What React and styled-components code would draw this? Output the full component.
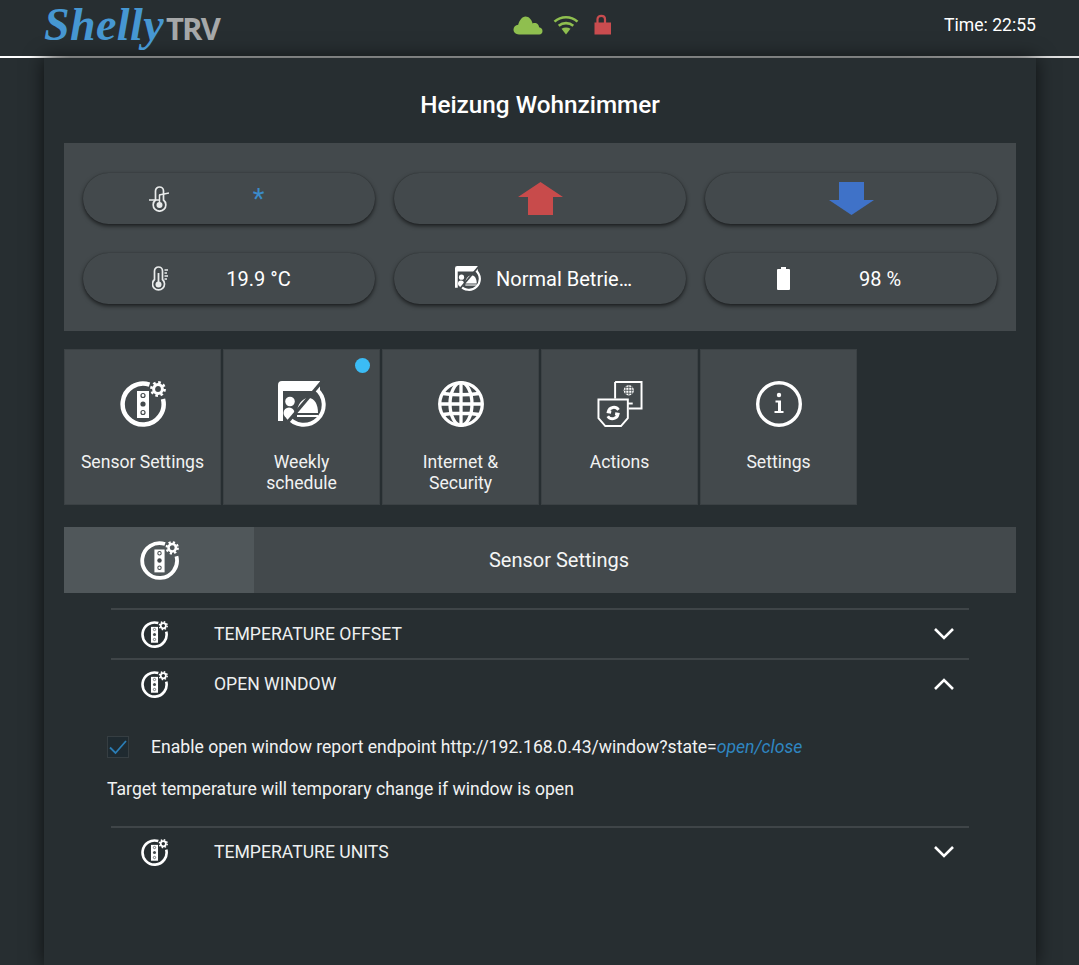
import React from 'react';
import styled, { createGlobalStyle } from 'styled-components';

const panelBg = '#43494c';
const pageBg = '#272e31';

const GlobalStyle = createGlobalStyle`
  html, body {
    margin: 0;
    height: 965px;
    overflow: hidden;
    background: ${pageBg};
    font-family: Roboto, "Liberation Sans", sans-serif;
    color: #fff;
  }
`;

const Header = styled.header`
  height: 56px;
  box-sizing: border-box;
  display: grid;
  grid-template-columns: 513px 1fr auto;
  align-items: center;
  padding: 0 43px 7px 0;
  background: #272e31;
`;

const HeaderLine = styled.div`
  height: 2px;
  background: linear-gradient(90deg, #fff 0, #fff 30px, #b4b6b6 70px, #b4b6b6 900px, #e4e4e4 100%);
`;

const Logo = styled.div`
  display: flex;
  align-items: baseline;
  padding-left: 44px;
  height: 46px;
`;

const LogoScript = styled.span`
  font-family: "Liberation Serif", serif;
  font-style: italic;
  font-weight: 700;
  font-size: 46px;
  line-height: 46px;
  letter-spacing: 0.4px;
  color: #4697d2;
`;

const LogoProduct = styled.span`
  font-family: "Open Sans", sans-serif;
  font-weight: 700;
  font-size: 31px;
  letter-spacing: -1.8px;
  color: #a6a8a9;
  margin-left: 2px;
`;

const StatusIcons = styled.div`
  display: flex;
  align-items: center;
  svg { display: block; }
`;

const Clock = styled.div`
  font-size: 17.6px;
`;

const Card = styled.main`
  margin: 0 43px 0 44px;
  padding: 0 20px;
  height: 907px;
  background: ${pageBg};
  box-shadow: 0 0 18px rgba(0, 0, 0, .65);
`;

const Title = styled.h1`
  margin: 0;
  height: 85px;
  display: flex;
  align-items: center;
  justify-content: center;
  padding-top: 8px;
  box-sizing: border-box;
  font-size: 24.3px;
  font-weight: 500;
`;

const ControlPanel = styled.section`
  display: grid;
  grid-template-columns: repeat(3, 1fr);
  gap: 29px 19px;
  padding: 30px 19px 27px;
  background: ${panelBg};
`;

const Pill = styled.div`
  height: 51px;
  box-sizing: border-box;
  border-radius: 26px;
  display: flex;
  align-items: center;
  justify-content: ${p => (p.$center ? 'center' : 'flex-start')};
  padding-left: ${p => (p.$center ? 0 : p.$iconLeft || 66)}px;
  background: ${panelBg};
  box-shadow: 0 2px 4px rgba(0, 0, 0, .6), 0 0 1px rgba(0, 0, 0, .35);
  font-size: 20px;
  svg { display: block; flex: none; }
`;

const PillValue = styled.span`
  flex: ${p => (p.$tight ? 'none' : 1)};
  margin-left: ${p => p.$gap || 0}px;
  padding-right: ${p => (p.$tight ? 0 : 27)}px;
  text-align: center;
  font-size: ${p => p.$size || 20}px;
  color: ${p => p.$color || '#fff'};
`;

const TileGrid = styled.nav`
  display: grid;
  grid-template-columns: repeat(6, 1fr);
  gap: 2px;
  margin-top: 18px;
`;

const Tile = styled.div`
  position: relative;
  height: 156px;
  box-sizing: border-box;
  padding-top: 31px;
  border: 1px solid #3b4144;
  background: ${panelBg};
  display: flex;
  flex-direction: column;
  align-items: center;
  text-align: center;
  font-size: 17.6px;
  line-height: 21px;
  svg { display: block; }
`;

const TileLabel = styled.div`
  margin-top: 25px;
  padding: 0 8px;
  color: #f1f2f2;
`;

const Badge = styled.span`
  position: absolute;
  top: 8px;
  right: 9px;
  width: 15px;
  height: 15px;
  border-radius: 50%;
  background: #3bbcf5;
`;

const TabBar = styled.div`
  display: grid;
  grid-template-columns: 190px 610px 1fr;
  height: 66px;
  margin-top: 22px;
  background: ${panelBg};
`;

const Tab = styled.div`
  display: flex;
  align-items: center;
  justify-content: center;
  font-size: 20px;
  color: #f4f5f5;
  background: ${p => (p.$active ? '#50575a' : 'transparent')};
`;

const Accordion = styled.section`
  margin: 15px 47px 0;
`;

const Row = styled.div`
  height: 50px;
  box-sizing: border-box;
  border-top: 2px solid #3f4548;
  display: grid;
  grid-template-columns: 103px 1fr 50px;
  align-items: center;
  font-size: 17.6px;
  color: #eef0f0;
  svg { display: block; }
`;

const RowIcon = styled.div`
  display: flex;
  justify-content: center;
  padding-right: 17px;
`;

const RowChevron = styled.div`
  display: flex;
  justify-content: center;
`;

const RowBody = styled.div`
  height: 118px;
  box-sizing: border-box;
  margin-left: -4px;
  padding-top: 28px;
  font-size: 17.6px;
  color: #f1f2f2;
`;

const CheckLine = styled.div`
  display: flex;
  align-items: center;
  gap: 22px;
  height: 22px;
`;

const CheckBox = styled.span`
  width: 22px;
  height: 22px;
  box-sizing: border-box;
  border: 1px solid #363e42;
  background: #1f2a30;
  display: flex;
  align-items: center;
  justify-content: center;
`;

const Endpoint = styled.em`
  color: #2f86c1;
`;

const Hint = styled.p`
  margin: 20px 0 0;
  line-height: 22px;
`;

const Cloud = () => (
  <svg width="30" height="20" viewBox="0 0 30 20">
    <path fill="#8fbf4f" d="M6 19.500C2.600 19.500 .5 17.300 .5 14.600c0-2.700 2-4.700 4.700-4.900C6.200 6 8.900 1.600 12.600 1.600c3.200 0 5.900 2.900 7 6.800 1-.5 2-.6 3-.3 2 .5 3.300 2.200 3.500 4.200 2 .3 3.400 1.600 3.400 3.800 0 2.200-1.300 3.400-3.200 3.400z" />
  </svg>
);

const Wifi = () => (
  <svg width="26" height="20" viewBox="0 0 26 20" style={{ marginLeft: 10 }}>
    <path fill="none" stroke="#8fbf4f" strokeWidth="2.600" d="M1.500 6.600C8 .7 18 .7 24.500 6.600" />
    <path fill="none" stroke="#8fbf4f" strokeWidth="2.600" d="M5.700 10.700c4.300-3.500 10.300-3.500 14.600 0" />
    <path fill="#8fbf4f" d="M13 19.500 8.500 13.800c2.700-1.800 6.300-1.800 9 0z" />
  </svg>
);

const Lock = () => (
  <svg width="18" height="21" viewBox="0 0 18 21" style={{ marginLeft: 15 }}>
    <path fill="none" stroke="#c94c4f" strokeWidth="2.200" d="M3.500 9V5c0-4.300 7.500-4.300 7.500 0v4" />
    <rect x=".5" y="8.500" width="16.500" height="12" fill="#c94c4f" />
  </svg>
);

const ThermoSet = () => (
  <svg width="20" height="26" viewBox="0 0 20 26" fill="none" stroke="#e9ebeb" strokeWidth="1.700">
    <path d="M6.500 14V5a4 4 0 0 1 8 0v9a6.300 6.300 0 1 1-8 0z" />
    <circle cx="10.500" cy="19" r="3" fill="#e9ebeb" stroke="none" />
    <path d="M10.500 18V9" strokeWidth="1.500" />
    <path d="M0 14h10M10 9l10-2" />
  </svg>
);

const Thermo = () => (
  <svg width="17" height="25" viewBox="0 0 17 25" fill="none" stroke="#e9ebeb" strokeWidth="1.700">
    <path d="M2.500 13.500V5a4 4 0 0 1 8 0v8.500a6 6 0 1 1-8 0z" />
    <circle cx="6.500" cy="18.500" r="3" fill="#e9ebeb" stroke="none" />
    <path d="M6.500 18V7" strokeWidth="1.800" />
    <path d="M12.500 4H16M12.500 7H15M12.500 10H16M12.500 13H15" strokeWidth="1.300" />
  </svg>
);

const Battery = () => (
  <svg width="13" height="23" viewBox="0 0 13 23">
    <path fill="#fff" d="M4 0h5v2h3a1 1 0 0 1 1 1v19a1 1 0 0 1-1 1H1a1 1 0 0 1-1-1V3a1 1 0 0 1 1-1h3z" />
  </svg>
);

const ArrowUp = () => (
  <svg width="45" height="33" viewBox="0 0 45 33">
    <path fill="#c84b4b" d="M22.500 0 45 15H35v18H10V15H0z" />
  </svg>
);

const ArrowDown = () => (
  <svg width="45" height="33" viewBox="0 0 45 33">
    <path fill="#3f72c8" d="M22.500 33 45 18H35V0H10v18H0z" />
  </svg>
);

const SensorIcon = ({ size = 46 }) => (
  <svg width={size} height={size} viewBox="0 0 46 46">
    <path fill="none" stroke="#fff" strokeWidth="4.500" d="M29.500 3.600A20.500 20.500 0 1 0 43 18" />
    <rect x="17" y="10" width="12" height="27" fill="#fff" />
    <circle cx="23" cy="14.500" r="2" fill="none" stroke="#43494c" strokeWidth="1.200" />
    <circle cx="23" cy="23" r="2.600" fill="#43494c" />
    <circle cx="23" cy="31.500" r="2" fill="none" stroke="#43494c" strokeWidth="1.200" />
    <circle cx="38" cy="8" r="4.400" fill="none" stroke="#fff" strokeWidth="3" />
    <circle cx="38" cy="8" r="6.600" fill="none" stroke="#fff" strokeWidth="2.600" strokeDasharray="2.590 2.590" />
  </svg>
);

const ScheduleIcon = ({ height = 46 }) => (
  <svg width={height * 48 / 46} height={height} viewBox="0 0 48 46">
    <path fill="#fff" d="M4 0h38v10H5v30H0V4a4 4 0 0 1 4-4z" />
    <circle cx="12" cy="20.500" r="4.800" fill="#fff" />
    <circle cx="11" cy="32" r="5.500" fill="#fff" />
    <path fill="none" stroke="#fff" strokeWidth="4" d="M38 8A20 20 0 1 1 9.500 35.500" />
    <path fill="#fff" d="M19 32c0-8 5-15 11.500-15S40 24 40 32z" />
    <path stroke="#fff" strokeWidth="2" d="M19 35h21" />
    <path stroke={panelBg} strokeWidth="3.200" d="M47-3 3 49" />
  </svg>
);

const GlobeIcon = () => (
  <svg width="46" height="46" viewBox="0 0 46 46" fill="none" stroke="#fff" strokeWidth="3.300">
    <circle cx="23" cy="23" r="21.300" />
    <ellipse cx="23" cy="23" rx="11" ry="21.300" />
    <path d="M23 2v42M2 23h42M5 12.500c11 1.500 25 1.500 36 0M5 33.500c11-1.500 25-1.500 36 0" />
  </svg>
);

const ActionsIcon = () => (
  <svg width="46" height="46" viewBox="0 0 46 47" fill="none" stroke="#fff" strokeWidth="2">
    <path d="M18 1h27v27H32" />
    <path d="M18 1v17" />
    <circle cx="32" cy="9.500" r="5.200" fill="#fff" stroke="none" />
    <path d="M27 9.500h10M32 4.500v10M29 4.500v10M35 4.500v10M28 6.500h8M28 12.500h8" stroke={panelBg} strokeWidth=".8" />
    <path d="M29 23h7" strokeWidth="2" />
    <path d="M1 19h30v19l-7 8H8l-7-8z" fill={panelBg} />
    <path d="M21.500 29.500a5.800 5.800 0 0 0-10.500 2l3 .5M10.500 36a5.800 5.800 0 0 0 10.500-2l-3-.5" strokeWidth="3" />
  </svg>
);

const InfoIcon = () => (
  <svg width="46" height="46" viewBox="0 0 46 46">
    <circle cx="23" cy="23" r="21.300" fill="none" stroke="#fff" strokeWidth="3.400" />
    <circle cx="23" cy="14" r="2.200" fill="#fff" />
    <path fill="#fff" d="M19.500 19.500h5.500V30h2.500v2h-9v-2H22v-8.500h-2.500z" />
  </svg>
);

const Chevron = ({ up }) => (
  <svg width="22" height="14" viewBox="0 0 22 14" fill="none" stroke="#fff" strokeWidth="2.600">
    <path d={up ? 'M2 12 11 3l9 9' : 'M2 2l9 9 9-9'} />
  </svg>
);

const tiles = [
  { label: 'Sensor Settings', icon: <SensorIcon /> },
  { label: <>Weekly<br />schedule</>, icon: <ScheduleIcon />, badge: true },
  { label: <>Internet &amp;<br />Security</>, icon: <GlobeIcon /> },
  { label: 'Actions', icon: <ActionsIcon /> },
  { label: 'Settings', icon: <InfoIcon /> },
];

const AccordionRow = ({ title, up }) => (
  <Row>
    <RowIcon><SensorIcon size={27} /></RowIcon>
    <span>{title}</span>
    <RowChevron><Chevron up={up} /></RowChevron>
  </Row>
);

export default function App() {
  return (
    <>
      <GlobalStyle />
      <Header>
        <Logo>
          <LogoScript>Shelly</LogoScript>
          <LogoProduct>TRV</LogoProduct>
        </Logo>
        <StatusIcons>
          <Cloud />
          <Wifi />
          <Lock />
        </StatusIcons>
        <Clock>Time: 22:55</Clock>
      </Header>
      <HeaderLine />
      <Card>
        <Title>Heizung Wohnzimmer</Title>
        <ControlPanel>
          <Pill>
            <ThermoSet />
            <PillValue $color="#3b8bc9" $size={27}>*</PillValue>
          </Pill>
          <Pill $center><ArrowUp /></Pill>
          <Pill $center><ArrowDown /></Pill>
          <Pill $iconLeft={69}>
            <Thermo />
            <PillValue>19.9 °C</PillValue>
          </Pill>
          <Pill $iconLeft={61}>
            <ScheduleIcon height={25} />
            <PillValue $tight $gap={15}>Normal Betrie…</PillValue>
          </Pill>
          <Pill $iconLeft={72}>
            <Battery />
            <PillValue>98 %</PillValue>
          </Pill>
        </ControlPanel>
        <TileGrid>
          {tiles.map((t, i) => (
            <Tile key={i}>
              {t.badge && <Badge />}
              {t.icon}
              <TileLabel>{t.label}</TileLabel>
            </Tile>
          ))}
        </TileGrid>
        <TabBar>
          <Tab $active><SensorIcon size={39} /></Tab>
          <Tab>Sensor Settings</Tab>
        </TabBar>
        <Accordion>
          <AccordionRow title="TEMPERATURE OFFSET" />
          <AccordionRow title="OPEN WINDOW" up />
          <RowBody>
            <CheckLine>
              <CheckBox>
                <svg width="18" height="16" viewBox="0 0 18 16" fill="none" stroke="#2b7db5" strokeWidth="1.800">
                  <path d="M1 8.500 6.500 14 17 2" />
                </svg>
              </CheckBox>
              <span>Enable open window report endpoint http://192.168.0.43/window?state=<Endpoint>open/close</Endpoint></span>
            </CheckLine>
            <Hint>Target temperature will temporary change if window is open</Hint>
          </RowBody>
          <AccordionRow title="TEMPERATURE UNITS" />
        </Accordion>
      </Card>
    </>
  );
}
